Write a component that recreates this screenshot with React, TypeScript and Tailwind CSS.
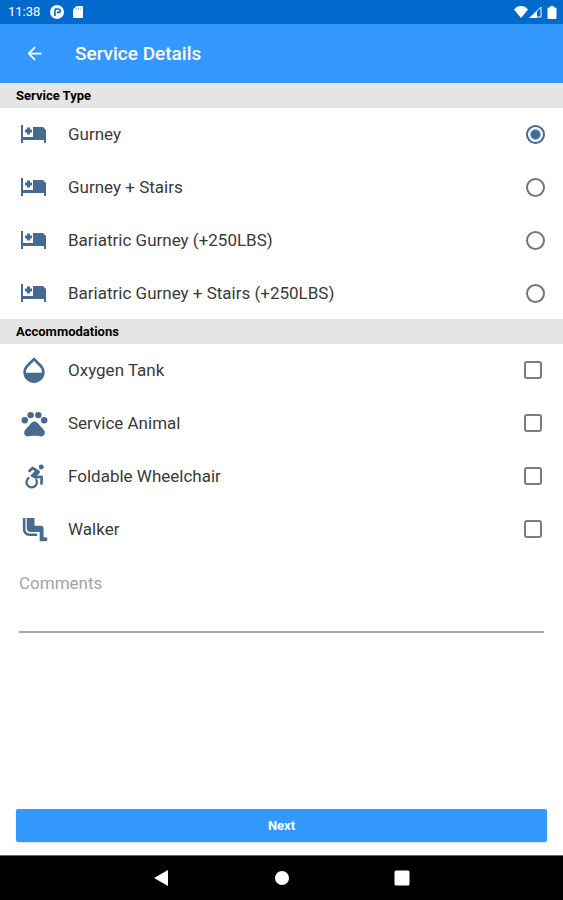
import { useState } from "react";
import type { ReactNode } from "react";
import {
  MdAirlineSeatLegroomNormal,
  MdArrowBack,
  MdOpacity,
  MdPets,
} from "react-icons/md";

const serviceTypes = [
  { id: "gurney", label: "Gurney" },
  { id: "gurney-stairs", label: "Gurney + Stairs" },
  { id: "bariatric", label: "Bariatric Gurney (+250LBS)" },
  { id: "bariatric-stairs", label: "Bariatric Gurney + Stairs (+250LBS)" },
];

const accommodations = [
  { id: "oxygen", label: "Oxygen Tank", icon: <MdOpacity size={32} /> },
  { id: "animal", label: "Service Animal", icon: <MdPets size={31} /> },
  { id: "wheelchair", label: "Foldable Wheelchair", icon: <WheelchairIcon /> },
  {
    id: "walker",
    label: "Walker",
    icon: <MdAirlineSeatLegroomNormal size={31} />,
  },
];

function GurneyIcon() {
  return (
    <svg width="26" height="18" viewBox="0 0 26 18" fill="currentColor">
      <path d="M0 0h2v12h10V2h10l3 3v13h-2v-3H2v3H0z" />
      <path d="M6 2.500h3v2h2v3H9v2H6v-2H4v-3h2z" />
    </svg>
  );
}

function WheelchairIcon() {
  return (
    <svg width="27" height="27" viewBox="0 0 24 24" fill="currentColor">
      <path d="M18.400 11.200l-4.100.2 2.300-2.600c.2-.3.3-.8.2-1.300-.1-.3-.2-.6-.5-.8l-5.400-3.200c-.4-.3-1-.2-1.400.1L6.800 6.100c-.5.5-.6 1.200-.1 1.700.4.5 1.200.5 1.700.1l2-1.800 1.900 1.100-4.200 4.300 4.600 2.600 1.200-.3 3.300-.3-.2 4.800c-.1.7.4 1.200 1.100 1.300h.1c.6 0 1.100-.5 1.200-1.100l.2-5.900c0-.3-.1-.7-.3-.9-.3-.3-.6-.4-.9-.4z" />
      <circle cx="18" cy="3.500" r="2.200" />
      <path
        d="M7.500 12.900A4.600 4.600 0 1 0 13.200 14.300"
        fill="none"
        stroke="currentColor"
        strokeWidth="2"
      />
    </svg>
  );
}

function StatusBar() {
  return (
    <div className="flex h-6 items-center bg-[#0069cc] pr-1.5 pl-2 text-[13px] text-white">
      <span>11:38</span>
      <svg className="ml-2.5" width="14" height="14" viewBox="0 0 14 14">
        <circle cx="7" cy="7" r="7" fill="#fff" />
        <path
          d="M5 11V4M5 4h3.500a1.700 1.700 0 0 1 0 3.400H7"
          fill="none"
          stroke="#0069cc"
          strokeWidth="1.600"
        />
      </svg>
      <svg className="ml-2" width="12" height="12" viewBox="0 0 12 12">
        <path d="M4.500 0H10a1 1 0 0 1 1 1v10a1 1 0 0 1-1 1H2a1 1 0 0 1-1-1V3.500z" fill="#fff" />
        <path d="M4.500 1.500v2M6.500 1.500v2M8.500 1.500v2" stroke="#0069cc" strokeWidth="0.4" />
      </svg>
      <div className="ml-auto flex items-center gap-px">
        <svg width="14" height="12" viewBox="0 0 14 12">
          <path d="M7 12L0 3.500C2 1 4.500 0 7 0s5 1 7 3.500z" fill="#fff" />
        </svg>
        <svg width="13" height="12" viewBox="0 0 13 12">
          <path d="M12 1v10H2z" fill="none" stroke="#fff" />
          <path d="M8 4.500V12H0z" fill="#fff" />
        </svg>
        <svg className="ml-1" width="10" height="13" viewBox="0 0 10 13">
          <path d="M3 0h4v1.500h1.500q1 0 1 1V12q0 1-1 1h-7q-1 0-1-1V2.500q0-1 1-1H3z" fill="#fff" />
        </svg>
      </div>
    </div>
  );
}

function SectionTitle({ children }: { children: ReactNode }) {
  return (
    <h2 className="bg-[#e5e5e5] px-4 text-[13px] leading-[25px] font-bold text-black">
      {children}
    </h2>
  );
}

function OptionRow({
  icon,
  label,
  children,
}: {
  icon: ReactNode;
  label: string;
  children: ReactNode;
}) {
  return (
    <label className="flex h-13 cursor-pointer items-center px-[18px] text-[17px] text-[#3a3a3a]">
      <span className="flex w-8 justify-center text-[#466a90]">{icon}</span>
      <span className="ml-[18px] flex-1 pt-0.5">{label}</span>
      {children}
    </label>
  );
}

export default function App() {
  const [service, setService] = useState("gurney");
  const [extras, setExtras] = useState<string[]>([]);
  const [comments, setComments] = useState("");

  function toggleExtra(id: string) {
    setExtras((prev) =>
      prev.includes(id) ? prev.filter((e) => e !== id) : [...prev, id]
    );
  }

  return (
    <div className="flex min-h-screen flex-col bg-white font-['Roboto',sans-serif]">
      <StatusBar />
      <header className="flex h-[59px] items-center bg-[#3399ff] px-6 text-white">
        <button aria-label="Back" className="cursor-pointer">
          <MdArrowBack size={21} />
        </button>
        <h1 className="ml-[30px] pt-0.5 text-[19px] font-medium">
          Service Details
        </h1>
      </header>

      <main className="flex flex-1 flex-col">
        <SectionTitle>Service Type</SectionTitle>
        <div className="flex flex-col gap-px">
          {serviceTypes.map((s) => (
            <OptionRow key={s.id} icon={<GurneyIcon />} label={s.label}>
              <input
                type="radio"
                name="service"
                checked={service === s.id}
                onChange={() => setService(s.id)}
                className="size-[19px] appearance-none rounded-full border-2 border-[#757575] checked:border-[#466a90] checked:bg-[radial-gradient(circle,#3d6a9c_4px,transparent_6px)]"
              />
            </OptionRow>
          ))}
        </div>

        <SectionTitle>Accommodations</SectionTitle>
        <div className="flex flex-col gap-px">
          {accommodations.map((a) => (
            <OptionRow key={a.id} icon={a.icon} label={a.label}>
              <input
                type="checkbox"
                checked={extras.includes(a.id)}
                onChange={() => toggleExtra(a.id)}
                className="mr-[3px] size-[18px] appearance-none rounded-[3px] border-2 border-[#7c7c7c] checked:border-[#466a90] checked:bg-[#466a90]"
              />
            </OptionRow>
          ))}
        </div>

        <textarea
          aria-label="Comments"
          placeholder="Comments"
          value={comments}
          onChange={(e) => setComments(e.target.value)}
          className="mx-[19px] mt-4 h-[62px] resize-none border-b-2 border-[#a6a6a6] text-[17px] leading-6 text-[#3a3a3a] outline-none placeholder:text-[#a3a3a3]"
        />

        <button className="mx-4 mt-auto mb-[13px] h-[33px] cursor-pointer rounded-xs bg-[#3399ff] text-[13px] font-bold text-white shadow-sm">
          Next
        </button>
      </main>

      <nav className="flex h-[45px] items-center justify-center gap-[104px] border-t border-[#666] bg-black text-white">
        <button aria-label="Back" className="cursor-pointer">
          <svg width="16" height="16" viewBox="0 0 16 16" fill="currentColor">
            <path d="M14 0v16L0 8z" />
          </svg>
        </button>
        <button aria-label="Home" className="cursor-pointer">
          <svg width="16" height="16" viewBox="0 0 16 16" fill="currentColor">
            <circle cx="8" cy="8" r="7" />
          </svg>
        </button>
        <button aria-label="Overview" className="cursor-pointer">
          <svg width="16" height="16" viewBox="0 0 16 16" fill="currentColor">
            <rect x="0.500" y="0.500" width="15" height="15" rx="1.500" />
          </svg>
        </button>
      </nav>
    </div>
  );
}
